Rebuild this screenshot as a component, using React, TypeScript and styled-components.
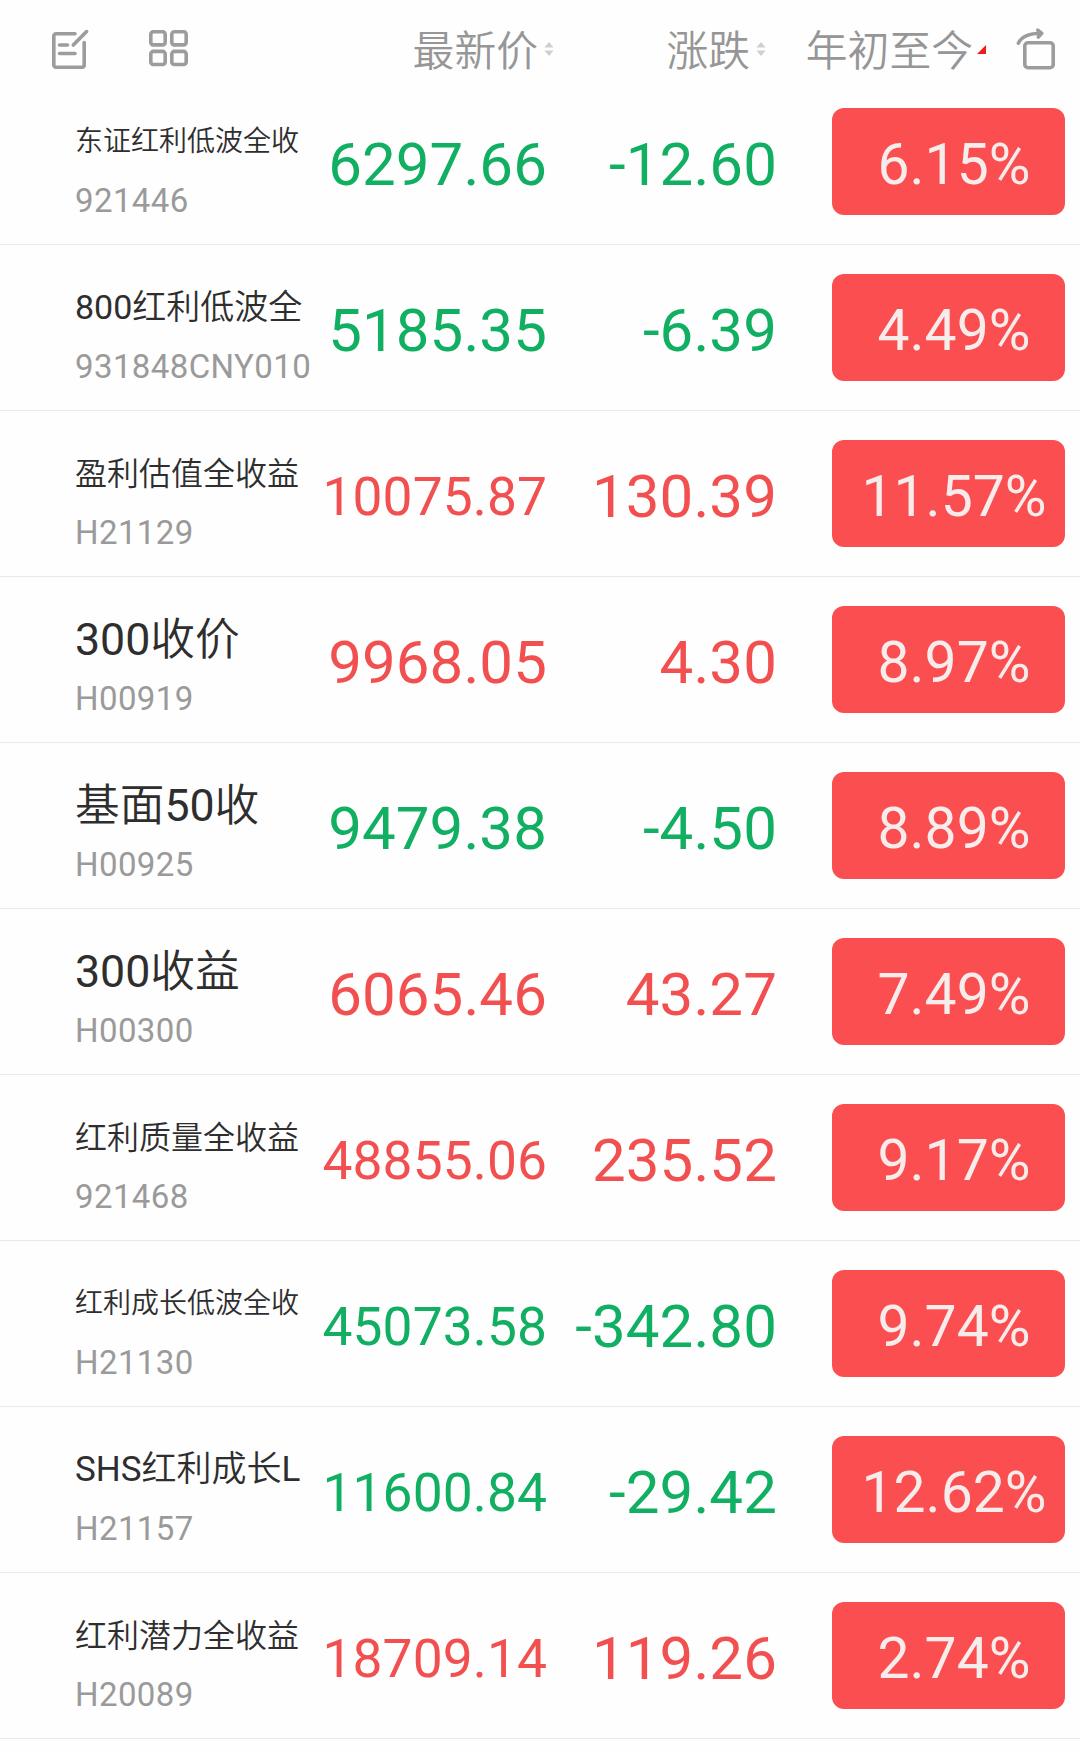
import React from "react";
import styled, { createGlobalStyle } from "styled-components";

const GlobalStyle = createGlobalStyle`
  * { box-sizing: border-box; }
  body {
    margin: 0;
    background: #fefefe;
    font-family: Roboto, "Noto Sans CJK SC", sans-serif;
  }
`;

const Page = styled.main`
  width: 1080px;
  height: 1752px;
  overflow: hidden;
  background: #fefefe;
`;

const Toolbar = styled.header`
  display: grid;
  grid-template-columns: 326px 228px 212px 220px 1fr;
  height: 79px;
  padding-top: 20px;
  align-items: start;
`;

const Tools = styled.div`
  display: flex;
  gap: 59px;
  padding: 8px 0 0 50px;
`;

const Icon = styled.svg`
  display: block;
  fill: none;
  stroke: #9c9c9c;
  stroke-width: 3.6;
  stroke-linecap: round;
  stroke-linejoin: round;
`;

const Heading = styled.div<{ $gap: number }>`
  display: flex;
  align-items: center;
  justify-content: flex-end;
  height: 56px;
  gap: ${(p) => p.$gap}px;
  font-family: "Noto Sans CJK SC DemiLight", "Noto Sans CJK SC", sans-serif;
  font-size: 41.8px;
  font-weight: 350;
  line-height: 56px;
  color: #969696;
  white-space: nowrap;
`;

const SortMark = styled.svg`
  display: block;
  flex: none;
  margin-top: 2px;
`;

const RotateTool = styled.div`
  padding: 7px 0 0 29px;
`;

const Row = styled.article`
  display: grid;
  grid-template-columns: 316px 231px 230px 1fr;
  height: 166px;
  border-bottom: 1px solid #e9e9e9;
`;

const Identity = styled.div`
  padding: 33px 0 0 75px;
  white-space: nowrap;
`;

const Name = styled.div<{ $size: number }>`
  height: 60px;
  font-family: Roboto, "Noto Sans CJK SC DemiLight", "Noto Sans CJK SC", sans-serif;
  font-size: ${(p) => p.$size}px;
  line-height: ${(p) => (p.$size === 34 ? 58 : 60)}px;
  color: #2e2e2e;
`;

const Code = styled.div`
  height: 40px;
  margin-top: 9px;
  font-size: 33px;
  line-height: 40px;
  letter-spacing: 0.4px;
  color: #9a9a9a;
`;

const Figure = styled.div<{ $up: boolean; $size: number }>`
  padding-top: 46px;
  text-align: right;
  font-size: ${(p) => p.$size}px;
  line-height: 80px;
  letter-spacing: 0.1px;
  white-space: nowrap;
  color: ${(p) => (p.$up ? "#f25050" : "#10af61")};
`;

const Badge = styled.div`
  justify-self: end;
  width: 233px;
  height: 107px;
  margin: 29px 15px 0 0;
  padding: 3px 0 0 11px;
  border-radius: 12px;
  background: #fb4e50;
  color: #f6ecec;
  font-size: 57px;
  line-height: 107px;
  text-align: center;
`;

type Quote = {
  name: string;
  size: number;
  code: string;
  price: string;
  change: string;
  ytd: string;
};

const quotes: Quote[] = [
  { name: "东证红利低波全收", size: 28, code: "921446", price: "6297.66", change: "-12.60", ytd: "6.15%" },
  { name: "800红利低波全", size: 34, code: "931848CNY010", price: "5185.35", change: "-6.39", ytd: "4.49%" },
  { name: "盈利估值全收益", size: 32, code: "H21129", price: "10075.87", change: "130.39", ytd: "11.57%" },
  { name: "300收价", size: 44.7, code: "H00919", price: "9968.05", change: "4.30", ytd: "8.97%" },
  { name: "基面50收", size: 44.7, code: "H00925", price: "9479.38", change: "-4.50", ytd: "8.89%" },
  { name: "300收益", size: 44.7, code: "H00300", price: "6065.46", change: "43.27", ytd: "7.49%" },
  { name: "红利质量全收益", size: 32, code: "921468", price: "48855.06", change: "235.52", ytd: "9.17%" },
  { name: "红利成长低波全收", size: 28, code: "H21130", price: "45073.58", change: "-342.80", ytd: "9.74%" },
  { name: "SHS红利成长L", size: 35, code: "H21157", price: "11600.84", change: "-29.42", ytd: "12.62%" },
  { name: "红利潜力全收益", size: 32, code: "H20089", price: "18709.14", change: "119.26", ytd: "2.74%" },
];

const EditIcon = () => (
  <Icon width="40" height="42" viewBox="0 0 40 42">
    <path d="M25 5.8H6a2.2 2.2 0 0 0-2.2 2.2v29a2.2 2.2 0 0 0 2.2 2.2h26a2.2 2.2 0 0 0 2.2-2.2V14.5" />
    <path d="M36.6 3.6 23.3 17M9.5 17h8M9.5 25.5H25" />
  </Icon>
);

const GridIcon = () => (
  <Icon width="40" height="40" viewBox="0 0 40 40">
    <rect x="1.8" y="3.8" width="14.4" height="13.1" rx="2.6" />
    <rect x="22.8" y="3.8" width="14.4" height="13.1" rx="2.6" />
    <rect x="1.8" y="23.4" width="14.4" height="13.1" rx="2.6" />
    <rect x="22.8" y="23.4" width="14.4" height="13.1" rx="2.6" />
  </Icon>
);

const RotateIcon = () => (
  <Icon width="42" height="44" viewBox="0 0 42 44">
    <rect x="9.8" y="15.8" width="28.4" height="24.9" rx="3.2" />
    <path d="M3.4 16.2C6.5 9.5 14 6.3 26.5 6.3M22.8 3.2 26.8 6.3 23.3 10" />
  </Icon>
);

const BothWays = () => (
  <SortMark width="10" height="14" viewBox="0 0 10 14">
    <path d="M5 0 9.6 5.6H.4Z" fill="#cfcfcf" />
    <path d="M5 14 9.6 8.4H.4Z" fill="#cfcfcf" />
  </SortMark>
);

const Descending = () => (
  <SortMark width="9" height="9" viewBox="0 0 9 9">
    <path d="M9 0V9H0Z" fill="#ee1c1c" />
  </SortMark>
);

export default function App() {
  return (
    <Page>
      <GlobalStyle />
      <Toolbar>
        <Tools>
          <EditIcon />
          <GridIcon />
        </Tools>
        <Heading $gap={6}>
          最新价
          <BothWays />
        </Heading>
        <Heading $gap={6}>
          涨跌
          <BothWays />
        </Heading>
        <Heading $gap={4}>
          年初至今
          <Descending />
        </Heading>
        <RotateTool>
          <RotateIcon />
        </RotateTool>
      </Toolbar>
      {quotes.map((q) => {
        const up = !q.change.startsWith("-");
        return (
          <Row key={q.code}>
            <Identity>
              <Name $size={q.size}>{q.name}</Name>
              <Code>{q.code}</Code>
            </Identity>
            <Figure $up={up} $size={q.price.length > 7 ? 53.3 : 60}>
              {q.price}
            </Figure>
            <Figure $up={up} $size={60}>
              {q.change}
            </Figure>
            <Badge>{q.ytd}</Badge>
          </Row>
        );
      })}
    </Page>
  );
}
